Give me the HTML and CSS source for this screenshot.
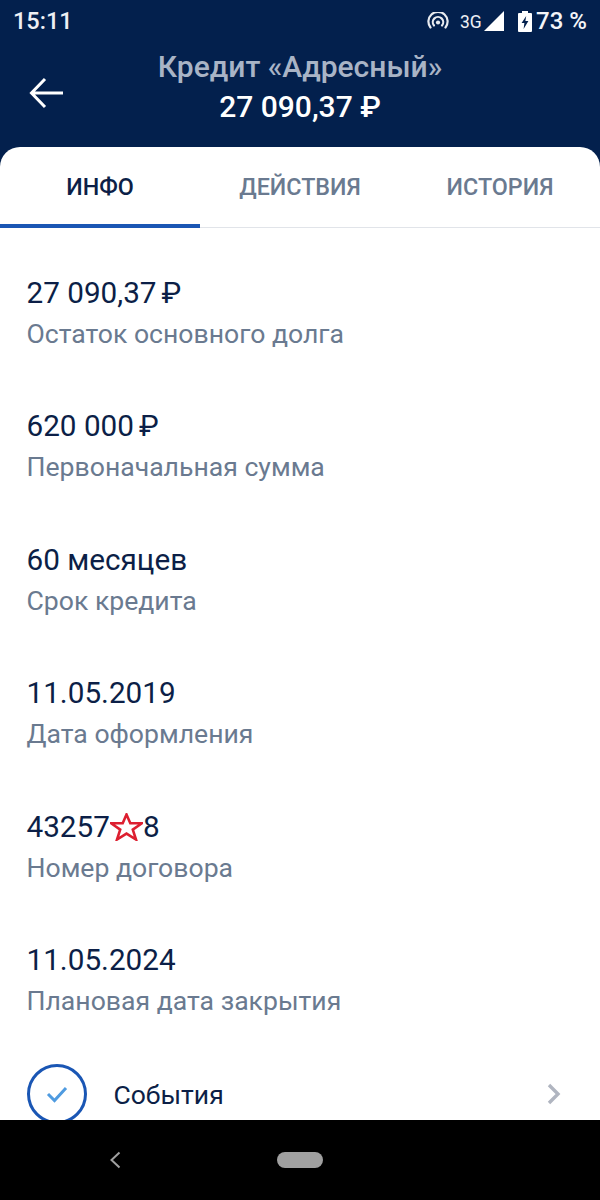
FILE: index.html
```html
<!DOCTYPE html>
<html lang="ru">
<head>
<meta charset="utf-8">
<title>Кредит «Адресный»</title>
<link rel="stylesheet" href="styles.css">
</head>
<body>
<div class="screen">
  <div class="status">
    <span class="time">15:11</span>
    <div class="status-right">
      <svg class="ic-hotspot" width="24" height="18" viewBox="0 0 24 18"><g fill="none" stroke="#e8ebf0" stroke-width="2.2" stroke-linecap="round"><path d="M4.5 15.5A9.6 9.6 0 1 1 19.5 15.5"/><path d="M8 13.5A5.2 5.2 0 1 1 16 13.5"/></g><circle cx="12" cy="10.5" r="2.1" fill="#e8ebf0"/></svg>
      <span class="net">3G</span>
      <svg class="ic-signal" width="22" height="22" viewBox="0 0 22 22"><path d="M21 1V21H1Z" fill="#fff"/></svg>
      <svg class="ic-batt" width="14" height="22" viewBox="0 0 14 22"><path d="M4 1h6v2h3a1 1 0 0 1 1 1v17a1 1 0 0 1-1 1H1a1 1 0 0 1-1-1V4a1 1 0 0 1 1-1h3Z" fill="#fff"/><path d="M8.2 6 3.6 13h2.8L5.6 19l4.8-8H7.4Z" fill="#03204d"/></svg>
      <span class="pct">73 %</span>
    </div>
  </div>
  <header class="head">
    <svg class="back" width="36" height="32" viewBox="0 0 36 32"><path d="M34 16H3M16 2 2.5 16 16 30" fill="none" stroke="#fff" stroke-width="3"/></svg>
    <div class="head-title">Кредит «Адресный»</div>
    <div class="head-sum">27 090,37 ₽</div>
  </header>
  <main class="sheet">
    <nav class="tabs">
      <div class="tab active">ИНФО</div>
      <div class="tab">ДЕЙСТВИЯ</div>
      <div class="tab">ИСТОРИЯ</div>
    </nav>
    <div class="list">
      <div class="item"><div class="val">27 090,37<span class="rub">₽</span></div><div class="lab">Остаток основного долга</div></div>
      <div class="item"><div class="val">620 000<span class="rub">₽</span></div><div class="lab">Первоначальная сумма</div></div>
      <div class="item"><div class="val">60 месяцев</div><div class="lab">Срок кредита</div></div>
      <div class="item"><div class="val">11.05.2019</div><div class="lab">Дата оформления</div></div>
      <div class="item"><div class="val">43257<svg class="star" width="33" height="28" viewBox="0 0 33 28"><path d="M16.500 1.500 20.300 10.200H32L22.800 16.600 26 26.500 16.500 20.600 7 26.500 10.200 16.600 1 10.200H12.700Z" fill="none" stroke="#dd1f30" stroke-width="2.600"/></svg>8</div><div class="lab">Номер договора</div></div>
      <div class="item"><div class="val">11.05.2024</div><div class="lab">Плановая дата закрытия</div></div>
      <div class="event">
        <div class="circle"><svg width="22" height="18" viewBox="0 0 22 18"><path d="M2 9 8.500 15.500 20 3" fill="none" stroke="#4f9be0" stroke-width="3"/></svg></div>
        <span class="event-text">События</span>
        <svg class="chev" width="14" height="22" viewBox="0 0 14 22"><path d="M2 2 11 11 2 20" fill="none" stroke="#b0b5c0" stroke-width="3.400"/></svg>
      </div>
    </div>
  </main>
  <footer class="navbar">
    <svg class="nav-back" width="12" height="18" viewBox="0 0 12 18"><path d="M10.500 1.500 2.500 9 10.500 16.500" fill="none" stroke="#a0a0a0" stroke-width="2"/></svg>
    <div class="pill"></div>
  </footer>
</div>
</body>
</html>
```
FILE: styles.css
```css
* { box-sizing: border-box; }
html, body { margin: 0; padding: 0; }
body { font-family: Roboto, "Liberation Sans", sans-serif; background: #000; }
.screen { width: 600px; height: 1200px; display: flex; flex-direction: column; overflow: hidden; background: #03204d; }
.status { height: 40px; flex: none; display: flex; align-items: center; justify-content: space-between; padding: 2px 13px 0 13px; color: #fff; }
.time { font-size: 23.500px; font-weight: 500; color: #eef0f4; }
.status-right { display: flex; align-items: center; }
.ic-hotspot { margin-right: 9px; }
.net { font-size: 19px; color: #eef0f4; transform: scaleX(0.92); }
.ic-signal { margin-right: 13px; }
.ic-batt { margin-right: 4px; }
.pct { font-size: 24px; font-weight: 500; color: #f4f5f8; }
.head { height: 107px; flex: none; position: relative; display: flex; flex-direction: column; align-items: center; padding-top: 9px; }
.back { position: absolute; left: 29px; top: 37px; }
.head-title { font-size: 30px; font-weight: 500; line-height: 36px; margin-bottom: 4px; color: #a9b4c6; }
.head-sum { font-size: 30px; font-weight: 500; line-height: 36px; color: #fff; }
.sheet { flex: 1; min-height: 0; background: #fff; border-radius: 20px 20px 0 0; overflow: hidden; display: flex; flex-direction: column; }
.tabs { height: 81px; flex: none; display: flex; border-bottom: 1px solid #e1e4e9; }
.tab { flex: 1; height: 81px; display: flex; align-items: center; justify-content: center; padding-bottom: 2px; font-size: 23.300px; font-weight: 500; color: #6a7a90; }
.tab.active { color: #0c1f47; border-bottom: 4px solid #1a56b4; padding-bottom: 0; padding-top: 2px; }
.list { padding: 44px 26px 0 26.500px; flex: 1; min-height: 0; }
.item { height: 133.400px; }
.val { font-size: 29.700px; line-height: 42px; color: #0c1f47; display: flex; align-items: center; white-space: pre; }
.rub { margin-left: 5px; }
.lab { font-size: 26.600px; line-height: 40px; color: #6a7a90; }
.event { display: flex; align-items: center; height: 60px; margin-top: -8px; padding-left: 0.500px; }
.circle { width: 60px; height: 60px; flex: none; border: 3.500px solid #1a56b4; border-radius: 50%; display: flex; align-items: center; justify-content: center; }
.event-text { font-size: 26.500px; color: #0c1f47; margin-left: 26.500px; flex: 1; }
.chev { margin-right: 13px; }
.navbar { height: 80px; flex: none; background: #000; position: relative; }
.nav-back { position: absolute; left: 109px; top: 31px; }
.pill { position: absolute; left: 277px; top: 32px; width: 46px; height: 16px; border-radius: 8px; background: #a0a0a0; }
```
